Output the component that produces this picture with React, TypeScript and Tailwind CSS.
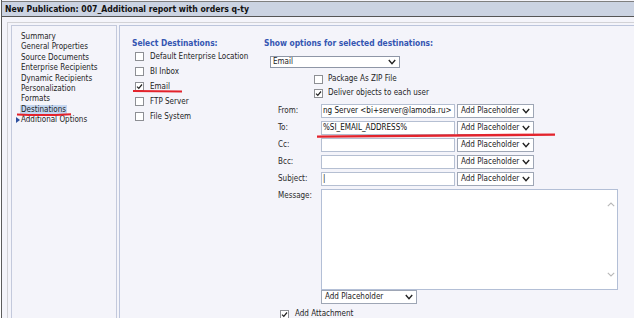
import React from "react";

const Chevron = ({ className = "" }: { className?: string }) => (
  <svg width="8" height="6" viewBox="0 0 8 6" className={`shrink-0 ${className}`}>
    <polyline points="0.8,1 4,4.6 7.2,1" fill="none" stroke="#222" strokeWidth="1.4" />
  </svg>
);

const Box = ({ checked = false }: { checked?: boolean }) => (
  <span className="w-[9px] h-[9px] border border-[#8d8f94] bg-white flex items-center justify-center shrink-0">
    {checked && (
      <svg width="7" height="7" viewBox="0 0 7 7">
        <polyline points="1,3.6 2.8,5.4 6,1.5" fill="none" stroke="#222" strokeWidth="1.2" />
      </svg>
    )}
  </span>
);

const Placeholder = ({ w = "w-[77px]" }: { w?: string }) => (
  <div className={`${w} h-[14px] border border-[#9ea6b5] bg-white flex items-center justify-between pl-[3px] pr-[3px] text-[#222] whitespace-nowrap overflow-hidden`}>
    <span>Add Placeholder</span>
    <Chevron />
  </div>
);

const navItems = [
  "Summary",
  "General Properties",
  "Source Documents",
  "Enterprise Recipients",
  "Dynamic Recipients",
  "Personalization",
  "Formats",
];

const dests: [string, boolean][] = [
  ["Default Enterprise Location", false],
  ["BI Inbox", false],
  ["Email", true],
  ["FTP Server", false],
  ["File System", false],
];

const fields: [string, string][] = [
  ["From:", "ng Server <bi+server@lamoda.ru>"],
  ["To:", "%SI_EMAIL_ADDRESS%"],
  ["Cc:", ""],
  ["Bcc:", ""],
  ["Subject:", "|"],
];

export default function App() {
  return (
    <div className="relative w-[640px] h-[318px] overflow-hidden bg-white text-[#1e1e1e] text-[8px] leading-[10px] [font-family:'DejaVu_Sans_Condensed','DejaVu_Sans','Liberation_Sans',sans-serif]">
      <div className="ml-[1px] w-[633px] h-full border-l border-[#5c5c5c] bg-[#f4f4fa] flex flex-col">
        <div className="mt-[1px] h-[16px] border-t border-[#7f7f7f] border-b border-b-[#555] bg-[#cbd3e2] pl-[3px] font-bold text-[8.6px] leading-[14px] text-[#111]">
          New Publication: 007_Additional report with orders q-ty
        </div>
        <div className="ml-[5px] mt-[5px] flex-1 border-l border-t border-[#d2d2d6] pl-[3px] pt-[2px] flex gap-[2px]">
          {/* left nav */}
          <div className="w-[106px] border-l border-t border-r border-[#c3c9dc] pt-[6px] pl-[9px] flex flex-col">
            {navItems.map((t) => (
              <div key={t} className="h-[10.4px] leading-[10.4px]">{t}</div>
            ))}
            <div className="h-[10.4px] leading-[10.4px]">
              <span className="-ml-[1px] px-[1px] bg-[#c4d6f0] inline-block leading-[9px]">Destinations</span>
            </div>
            <div className="h-[10.4px] leading-[10.4px] flex items-center -ml-[5px]">
              <svg width="4" height="6" viewBox="0 0 4 6" className="mr-[1px]">
                <polygon points="0,0 4,3 0,6" fill="#2d4f9e" />
              </svg>
              <span>Additional Options</span>
            </div>
          </div>
          {/* main panel */}
          <div className="flex-1 border-l border-t border-[#bcc5dc] flex">
            <div className="w-[144px] pl-[12px] pt-[12px]">
              <div className="font-bold text-[8.4px] leading-[10px] text-[#3556b2]">Select Destinations:</div>
              <div className="mt-[1px] flex flex-col">
                {dests.map(([t, c]) => (
                  <div key={t} className="h-[15px] flex items-center pl-[3px] gap-[6px]">
                    <Box checked={c} />
                    <span>{t}</span>
                  </div>
                ))}
              </div>
            </div>
            <div className="flex-1 pt-[12px]">
              <div className="font-bold text-[8.4px] leading-[10px] text-[#3556b2]">Show options for selected destinations:</div>
              <div className="ml-[6px] mt-[8px] w-[130px] h-[12px] border border-[#8e96a6] bg-white flex items-center justify-between pl-[2px] pr-[3px]">
                <span>Email</span>
                <Chevron />
              </div>
              <div className="mt-[4px] pl-[50px] flex flex-col">
                <div className="h-[14px] flex items-center gap-[5px]">
                  <Box />
                  <span>Package As ZIP File</span>
                </div>
                <div className="h-[14px] flex items-center gap-[5px]">
                  <Box checked />
                  <span>Deliver objects to each user</span>
                </div>
              </div>
              <div className="mt-[4px] pl-[14px] flex flex-col gap-[3px]">
                {fields.map(([l, v]) => (
                  <div key={l} className="flex items-center h-[14px]">
                    <span className="w-[43px] text-[#2a2a2a]">{l}</span>
                    <div className="w-[134px] h-[14px] border border-[#b5bfd2] bg-white pl-[1px] flex items-center overflow-hidden whitespace-nowrap text-[#111]">
                      {v}
                    </div>
                    <div className="ml-[2px]">
                      <Placeholder />
                    </div>
                  </div>
                ))}
                <div className="flex">
                  <span className="w-[43px] pt-[2px] text-[#2a2a2a]">Message:</span>
                  <div className="flex flex-col">
                    <div className="w-[297px] h-[101px] border border-[#b3bfd6] bg-white flex justify-end">
                      <div className="w-[12px] flex flex-col items-center justify-between py-[12px]">
                        <svg width="8" height="5" viewBox="0 0 8 5">
                          <polyline points="0.8,4.2 4,1 7.2,4.2" fill="none" stroke="#b8b8b8" strokeWidth="1.1" />
                        </svg>
                        <svg width="8" height="5" viewBox="0 0 8 5">
                          <polyline points="0.8,0.8 4,4 7.2,0.8" fill="none" stroke="#b8b8b8" strokeWidth="1.1" />
                        </svg>
                      </div>
                    </div>
                    <Placeholder w="w-[96px]" />
                  </div>
                </div>
              </div>
              <div className="mt-[3px] pl-[16px] h-[14px] flex items-center gap-[6px]">
                <Box checked />
                <span>Add Attachment</span>
              </div>
            </div>
          </div>
        </div>
      </div>
      <svg className="absolute inset-0 pointer-events-none" width="640" height="318">
        <path d="M17 114.5 Q 44 115.8 71 114.2" stroke="#e3232c" strokeWidth="2" fill="none" />
        <path d="M133 91 L 182 91.6" stroke="#e3232c" strokeWidth="2" fill="none" />
        <path d="M317 136.6 L 555 134.6" stroke="#e3232c" strokeWidth="2.4" fill="none" />
      </svg>
    </div>
  );
}
